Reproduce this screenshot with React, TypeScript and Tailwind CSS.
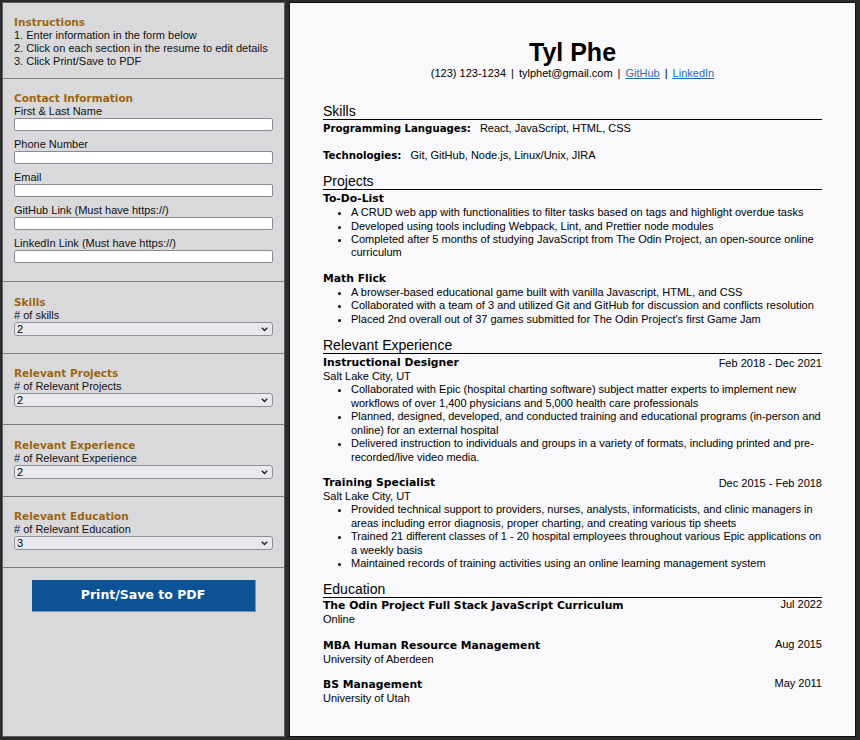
const heavy = "font-['DejaVu_Sans',sans-serif] font-bold"

const instructions = [
  '1. Enter information in the form below',
  '2. Click on each section in the resume to edit details',
  '3. Click Print/Save to PDF',
]

const contactFields = [
  'First & Last Name',
  'Phone Number',
  'Email',
  'GitHub Link (Must have https://)',
  'LinkedIn Link (Must have https://)',
]

const counters = [
  { title: 'Skills', label: '# of skills', value: '2' },
  { title: 'Relevant Projects', label: '# of Relevant Projects', value: '2' },
  { title: 'Relevant Experience', label: '# of Relevant Experience', value: '2' },
  { title: 'Relevant Education', label: '# of Relevant Education', value: '3' },
]

const projects = [
  {
    name: 'To-Do-List',
    points: [
      'A CRUD web app with functionalities to filter tasks based on tags and highlight overdue tasks',
      'Developed using tools including Webpack, Lint, and Prettier node modules',
      'Completed after 5 months of studying JavaScript from The Odin Project, an open-source online curriculum',
    ],
  },
  {
    name: 'Math Flick',
    points: [
      'A browser-based educational game built with vanilla Javascript, HTML, and CSS',
      'Collaborated with a team of 3 and utilized Git and GitHub for discussion and conflicts resolution',
      "Placed 2nd overall out of 37 games submitted for The Odin Project's first Game Jam",
    ],
  },
]

const jobs = [
  {
    title: 'Instructional Designer',
    dates: 'Feb 2018 - Dec 2021',
    place: 'Salt Lake City, UT',
    points: [
      'Collaborated with Epic (hospital charting software) subject matter experts to implement new workflows of over 1,400 physicians and 5,000 health care professionals',
      'Planned, designed, developed, and conducted training and educational programs (in-person and online) for an external hospital',
      'Delivered instruction to individuals and groups in a variety of formats, including printed and pre-recorded/live video media.',
    ],
  },
  {
    title: 'Training Specialist',
    dates: 'Dec 2015 - Feb 2018',
    place: 'Salt Lake City, UT',
    points: [
      'Provided technical support to providers, nurses, analysts, informaticists, and clinic managers in areas including error diagnosis, proper charting, and creating various tip sheets',
      'Trained 21 different classes of 1 - 20 hospital employees throughout various Epic applications on a weekly basis',
      'Maintained records of training activities using an online learning management system',
    ],
  },
]

const schools = [
  { degree: 'The Odin Project Full Stack JavaScript Curriculum', date: 'Jul 2022', school: 'Online' },
  { degree: 'MBA Human Resource Management', date: 'Aug 2015', school: 'University of Aberdeen' },
  { degree: 'BS Management', date: 'May 2011', school: 'University of Utah' },
]

function PanelTitle({ children }: { children: React.ReactNode }) {
  return <h3 className={`${heavy} text-[10.5px] leading-[13px] text-[#9c6611]`}>{children}</h3>
}

function Counter({ title, label, value }: { title: string; label: string; value: string }) {
  return (
    <div className="px-[11px] pt-[13.5px] pb-[17px] border-b border-[#7d7d80]">
      <PanelTitle>{title}</PanelTitle>
      <div className="leading-[13px]">{label}</div>
      <div className="relative">
        <select
          defaultValue={value}
          className="block w-full h-[14px] appearance-none bg-[#e9e9ed] border border-[#8f8f9d] rounded-[3px] pl-[2px] text-[11px] leading-[12px] text-black"
        >
          {[0, 1, 2, 3, 4, 5].map((n) => (
            <option key={n} value={String(n)}>{n}</option>
          ))}
        </select>
        <svg className="absolute right-[5px] top-[5px] pointer-events-none" width="7" height="5" viewBox="0 0 7 5">
          <path d="M0.8 0.8 L3.5 3.6 L6.2 0.8" fill="none" stroke="#222" strokeWidth="1.4" />
        </svg>
      </div>
    </div>
  )
}

function SectionHead({ title, first = false }: { title: string; first?: boolean }) {
  return (
    <h2 className={`${first ? 'mt-[23px]' : 'mt-[11px]'} text-[14px] leading-[16px] border-b border-black`}>
      {title}
    </h2>
  )
}

function Bullets({ items }: { items: string[] }) {
  return (
    <ul className="list-disc pl-[28px]">
      {items.map((p) => (
        <li key={p}>{p}</li>
      ))}
    </ul>
  )
}

export default function App() {
  return (
    <div className="h-[740px] w-[860px] bg-[#2b2b2b] pt-[2px] pb-[3px] pl-[2px] flex gap-[4px] font-['Liberation_Sans',Arial,sans-serif] text-[11px] text-[#111]">
      {/* form side */}
      <div className="w-[283px] h-full bg-[#d9d9dc] border border-[#5e5e62] flex flex-col">
        <div className="px-[11px] pt-[13px] pb-[10px] border-b border-[#7d7d80]">
          <PanelTitle>Instructions</PanelTitle>
          {instructions.map((t) => (
            <div key={t} className="leading-[13px]">{t}</div>
          ))}
        </div>

        <div className="px-[11px] pt-[13px] pb-[18px] border-b border-[#7d7d80]">
          <PanelTitle>Contact Information</PanelTitle>
          {contactFields.map((f, i) => (
            <div key={f} className={i > 0 ? 'mt-[7px]' : ''}>
              <div className="leading-[13px]">{f}</div>
              <input className="block w-full h-[13px] bg-white border border-[#8a8a96] rounded-[2px]" />
            </div>
          ))}
        </div>

        {counters.map((c) => (
          <Counter key={c.title} {...c} />
        ))}

        <div className="pt-[12px] flex justify-center">
          <button className={`w-[224px] h-[32px] bg-[#0b5296] border-b border-r border-[#7f93b0] text-white ${heavy} text-[12.5px]`}>
            Print/Save to PDF
          </button>
        </div>
      </div>

      {/* resume side */}
      <div className="w-[567px] h-full bg-[#f9f9fb] border border-[#111] px-[33px] pt-[35px] text-black">
        <h1 className="text-center text-[25px] leading-[29px] font-bold">Tyl Phe</h1>
        <div className="text-center leading-[13.4px]">
          (123) 123-1234<span className="px-[5px]">|</span>tylphet@gmail.com<span className="px-[5px]">|</span>
          <a className="text-[#1f6cc7] underline">GitHub</a>
          <span className="px-[5px]">|</span>
          <a className="text-[#1f6cc7] underline">LinkedIn</a>
        </div>

        <SectionHead title="Skills" first />
        <div className="mt-[2px] leading-[13.4px]">
          <div>
            <span className={`${heavy} text-[10.2px]`}>Programming Languages:</span>
            <span className="ml-[9px]">React, JavaScript, HTML, CSS</span>
          </div>
          <div className="mt-[13px]">
            <span className={`${heavy} text-[10.2px]`}>Technologies:</span>
            <span className="ml-[9px]">Git, GitHub, Node.js, Linux/Unix, JIRA</span>
          </div>
        </div>

        <SectionHead title="Projects" />
        <div className="mt-[2px] leading-[13.4px]">
          {projects.map((p, i) => (
            <div key={p.name} className={i > 0 ? 'mt-[12px]' : ''}>
              <div className={`${heavy} text-[10.8px] leading-[14px]`}>{p.name}</div>
              <Bullets items={p.points} />
            </div>
          ))}
        </div>

        <SectionHead title="Relevant Experience" />
        <div className="mt-[2px] leading-[13.4px]">
          {jobs.map((j, i) => (
            <div key={j.title} className={i > 0 ? 'mt-[12px]' : ''}>
              <div className="flex justify-between items-center leading-[14px]">
                <span className={`${heavy} text-[10.8px]`}>{j.title}</span>
                <span>{j.dates}</span>
              </div>
              <div>{j.place}</div>
              <Bullets items={j.points} />
            </div>
          ))}
        </div>

        <SectionHead title="Education" />
        <div className="mt-[1px] leading-[13.4px]">
          {schools.map((s, i) => (
            <div key={s.degree} className={i > 0 ? 'mt-[12px]' : ''}>
              <div className="flex justify-between items-start">
                <span className={`${heavy} text-[10.8px] leading-[14px]`}>{s.degree}</span>
                <span className="leading-[10px]">{s.date}</span>
              </div>
              <div>{s.school}</div>
            </div>
          ))}
        </div>
      </div>
    </div>
  )
}
